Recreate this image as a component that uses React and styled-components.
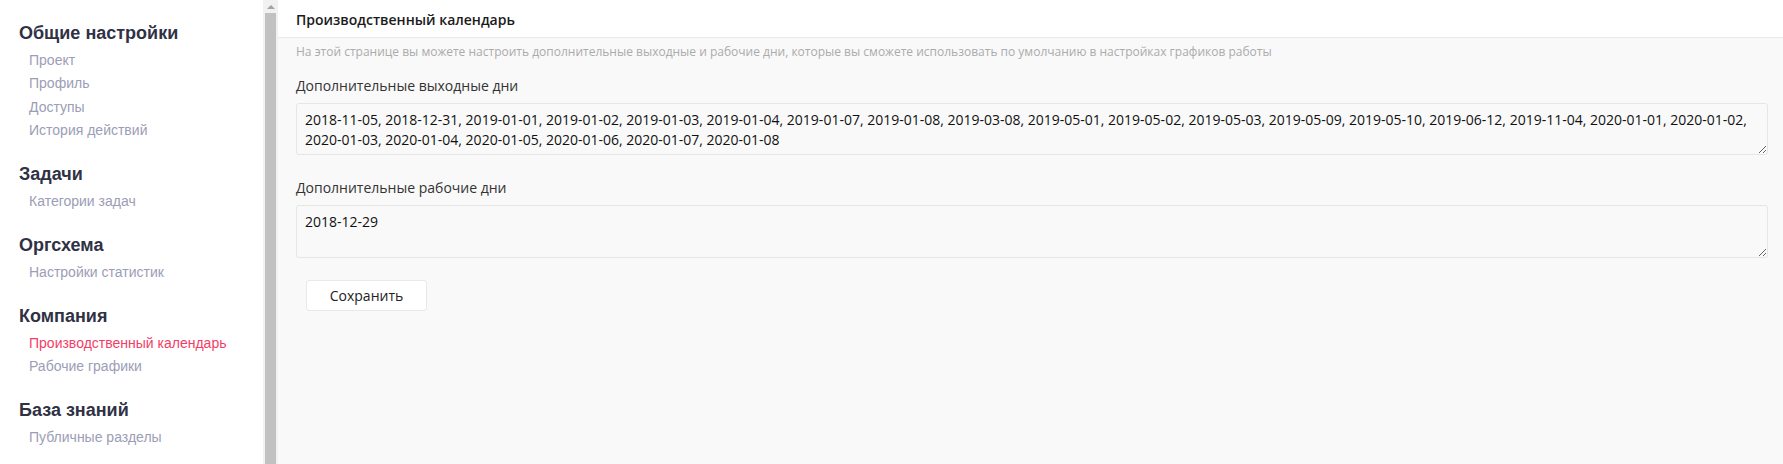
import React from 'react'
import styled, {createGlobalStyle} from 'styled-components'

const GlobalStyle = createGlobalStyle`
  html, body {
    margin: 0;
    padding: 0;
    height: 100%;
  }
  body {
    font-family: "Open Sans", "Noto Sans", sans-serif;
    background: #f9f9f9;
  }
  #root {
    height: 100%;
  }
`

const Layout = styled.div`
  display: flex;
  height: 464px;
  overflow: hidden;
`

const Sidebar = styled.aside`
  width: 263px;
  flex-shrink: 0;
  background: #fff;
  padding: 22px 0 0 19px;
  box-sizing: border-box;
  font-family: "Liberation Sans", Arial, sans-serif;
`

const Section = styled.div`
  margin-bottom: 20.5px;
`

const SectionTitle = styled.h3`
  margin: 0 0 5px;
  font-size: 18px;
  line-height: 22px;
  font-weight: 700;
  color: #2f3144;
`

const NavItem = styled.a`
  display: block;
  padding-left: 10px;
  font-size: 14px;
  line-height: 23.4px;
  color: ${({active}) => active ? '#f43d66' : '#9c9db6'};
  cursor: pointer;
  text-decoration: none;
`

const Scrollbar = styled.div`
  width: 15px;
  flex-shrink: 0;
  background: #f1f1f1;
  display: flex;
  flex-direction: column;
  align-items: center;
`

const ArrowUp = styled.div`
  margin: 5px 0 4px;
  width: 0;
  height: 0;
  border-left: 4px solid transparent;
  border-right: 4px solid transparent;
  border-bottom: 4px solid #a3a3a3;
`

const Thumb = styled.div`
  width: 11px;
  flex: 1;
  background: #c1c1c1;
`

const Main = styled.main`
  flex: 1;
  display: flex;
  flex-direction: column;
  background: #f9f9f9;
  min-width: 0;
`

const Header = styled.header`
  height: 38px;
  background: #fff;
  border-bottom: 1px solid #e9e9e9;
  display: flex;
  align-items: center;
  padding-left: 18px;
  padding-top: 2px;
  box-sizing: border-box;
`

const Title = styled.h2`
  margin: 0;
  font-size: 14px;
  font-weight: 600;
  color: #1b1b1b;
`

const Body = styled.div`
  padding: 6px 15px 0 18px;
  display: flex;
  flex-direction: column;
`

const Hint = styled.p`
  margin: 0 0 16px;
  font-size: 12px;
  line-height: 16px;
  color: #ababab;
`

const Field = styled.div`
  display: flex;
  flex-direction: column;
  margin-bottom: ${({last}) => last ? '22px' : '23px'};
`

const Label = styled.label`
  font-size: 14px;
  line-height: 20px;
  color: #333;
  margin-bottom: 7px;
`

const TextArea = styled.textarea`
  display: block;
  box-sizing: border-box;
  width: 100%;
  height: ${({h}) => h}px;
  padding: 6px 8px 4px;
  font-family: "Open Sans", "Noto Sans", sans-serif;
  font-size: 14px;
  line-height: 20px;
  color: #111;
  background: #f9f9f9;
  border: 1px solid #e6e6e6;
  border-radius: 3px;
  outline: none;
`

const SaveButton = styled.button`
  align-self: flex-start;
  margin-left: 10px;
  width: 121px;
  height: 31px;
  background: #fff;
  border: 1px solid #e9e9e9;
  border-radius: 3px;
  font-family: "Open Sans", "Noto Sans", sans-serif;
  font-size: 14px;
  color: #222;
  cursor: pointer;
`

const nav = [
  {title: 'Общие настройки', items: ['Проект', 'Профиль', 'Доступы', 'История действий']},
  {title: 'Задачи', items: ['Категории задач']},
  {title: 'Оргсхема', items: ['Настройки статистик']},
  {title: 'Компания', items: ['Производственный календарь', 'Рабочие графики']},
  {title: 'База знаний', items: ['Публичные разделы']},
]

const holidays = '2018-11-05, 2018-12-31, 2019-01-01, 2019-01-02, 2019-01-03, 2019-01-04, 2019-01-07, 2019-01-08, 2019-03-08, 2019-05-01, 2019-05-02, 2019-05-03, 2019-05-09, 2019-05-10, 2019-06-12, 2019-11-04, 2020-01-01, 2020-01-02, 2020-01-03, 2020-01-04, 2020-01-05, 2020-01-06, 2020-01-07, 2020-01-08'

export default function App() {
  return (
    <>
      <GlobalStyle />
      <Layout>
        <Sidebar>
          {nav.map(s => (
            <Section key={s.title}>
              <SectionTitle>{s.title}</SectionTitle>
              {s.items.map(i => (
                <NavItem key={i} active={i === 'Производственный календарь'}>{i}</NavItem>
              ))}
            </Section>
          ))}
        </Sidebar>
        <Scrollbar>
          <ArrowUp />
          <Thumb />
        </Scrollbar>
        <Main>
          <Header>
            <Title>Производственный календарь</Title>
          </Header>
          <Body>
            <Hint>На этой странице вы можете настроить дополнительные выходные и рабочие дни, которые вы сможете использовать по умолчанию в настройках графиков работы</Hint>
            <Field>
              <Label>Дополнительные выходные дни</Label>
              <TextArea h={52} defaultValue={holidays} />
            </Field>
            <Field last>
              <Label>Дополнительные рабочие дни</Label>
              <TextArea h={53} defaultValue="2018-12-29" />
            </Field>
            <SaveButton>Сохранить</SaveButton>
          </Body>
        </Main>
      </Layout>
    </>
  )
}
